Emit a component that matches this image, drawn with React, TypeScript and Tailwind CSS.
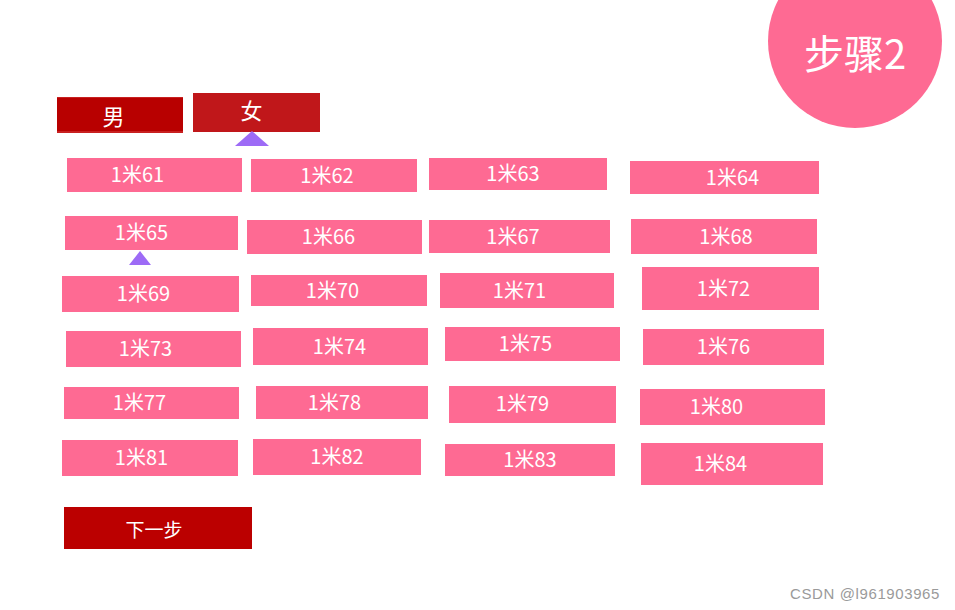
import React from 'react';

type Cell = {
  label: string;
  box: string; // margin + size, measured off the mockup
  text?: string; // nudges the label off-centre like the hand-placed originals
  marker?: boolean;
};

const rows: { height: string; cells: Cell[] }[] = [
  {
    height: 'h-[58px]',
    cells: [
      { label: '1米61', box: 'ml-[67px] mt-[0px] w-[175px] h-[34px]', text: 'pr-[34px]' },
      { label: '1米62', box: 'ml-[9px] mt-[1px] w-[166px] h-[33px]', text: 'pr-[14px]' },
      { label: '1米63', box: 'ml-[12px] mt-[0px] w-[178px] h-[32px]', text: 'pr-[10px]' },
      { label: '1米64', box: 'ml-[23px] mt-[3px] w-[189px] h-[33px]', text: 'pl-[16px]' },
    ],
  },
  {
    height: 'h-[51px]',
    cells: [
      { label: '1米65', box: 'ml-[65px] mt-[0px] w-[173px] h-[34px]', text: 'pr-[20px]', marker: true },
      { label: '1米66', box: 'ml-[9px] mt-[4px] w-[175px] h-[34px]', text: 'pr-[12px]' },
      { label: '1米67', box: 'ml-[7px] mt-[4px] w-[181px] h-[33px]', text: 'pr-[13px]' },
      { label: '1米68', box: 'ml-[21px] mt-[3px] w-[186px] h-[35px]', text: 'pl-[4px]' },
    ],
  },
  {
    height: 'h-[60px]',
    cells: [
      { label: '1米69', box: 'ml-[62px] mt-[9px] w-[177px] h-[36px]', text: 'pr-[14px]' },
      { label: '1米70', box: 'ml-[12px] mt-[8px] w-[176px] h-[31px]', text: 'pr-[13px]' },
      { label: '1米71', box: 'ml-[13px] mt-[6px] w-[174px] h-[35px]', text: 'pr-[15px]' },
      { label: '1米72', box: 'ml-[28px] mt-[0px] w-[177px] h-[43px]', text: 'pr-[14px]' },
    ],
  },
  {
    height: 'h-[59px]',
    cells: [
      { label: '1米73', box: 'ml-[66px] mt-[4px] w-[175px] h-[36px]', text: 'pr-[16px]' },
      { label: '1米74', box: 'ml-[12px] mt-[1px] w-[175px] h-[37px]', text: 'pr-[2px]' },
      { label: '1米75', box: 'ml-[17px] mt-[0px] w-[175px] h-[34px]', text: 'pr-[14px]' },
      { label: '1米76', box: 'ml-[23px] mt-[2px] w-[181px] h-[36px]', text: 'pr-[20px]' },
    ],
  },
  {
    height: 'h-[53px]',
    cells: [
      { label: '1米77', box: 'ml-[64px] mt-[1px] w-[175px] h-[32px]', text: 'pr-[24px]' },
      { label: '1米78', box: 'ml-[17px] mt-[0px] w-[172px] h-[33px]', text: 'pr-[15px]' },
      { label: '1米79', box: 'ml-[21px] mt-[0px] w-[167px] h-[37px]', text: 'pr-[20px] pb-[4px]' },
      { label: '1米80', box: 'ml-[24px] mt-[3px] w-[185px] h-[36px]', text: 'pr-[32px]' },
    ],
  },
  {
    height: 'h-[68px]',
    cells: [
      { label: '1米81', box: 'ml-[62px] mt-[1px] w-[176px] h-[36px]', text: 'pr-[17px]' },
      { label: '1米82', box: 'ml-[15px] mt-[0px] w-[168px] h-[36px]' },
      { label: '1米83', box: 'ml-[24px] mt-[5px] w-[170px] h-[32px]' },
      { label: '1米84', box: 'ml-[26px] mt-[4px] w-[182px] h-[42px]', text: 'pr-[23px]' },
    ],
  },
];

// little purple pointer that marks the current choice
function Pointer({ className }: { className: string }) {
  return (
    <svg className={`absolute ${className}`} viewBox="0 0 34 15" preserveAspectRatio="none">
      <polygon points="17,0 34,15 0,15" fill="#9d6bf6" />
    </svg>
  );
}

function HeightCell({ cell }: { cell: Cell }) {
  return (
    <div className={`relative flex shrink-0 items-center justify-center bg-[#fe6a93] ${cell.box}`}>
      <span className={`pb-[2px] text-[20px] leading-none text-white ${cell.text ?? ''}`}>{cell.label}</span>
      {cell.marker && <Pointer className="left-[64px] top-[35px] h-[14px] w-[22px]" />}
    </div>
  );
}

export default function App() {
  return (
    <div className="h-[610px] w-full overflow-hidden bg-white [font-family:'Noto_Sans_CJK_SC','Noto_Sans',sans-serif]">
      {/* Header: gender toggle + step badge */}
      <div className="flex h-[158px] items-start justify-between">
        <div className="flex items-start pt-[93px]">
          <div className="ml-[57px] mt-[4px] flex h-[36px] w-[126px] items-center justify-center border-t border-b-2 border-[#c82020] bg-[#b80000]">
            <span className="pr-[13px] text-[22px] leading-none text-white">男</span>
          </div>
          <div className="relative ml-[10px] flex h-[39px] w-[127px] items-center justify-center bg-[#c0171a]">
            <span className="pb-[8px] pr-[10px] text-[22px] leading-none text-white">女</span>
            <Pointer className="left-[42px] top-[38px] h-[15px] w-[34px]" />
          </div>
        </div>
        <div className="mr-[13px] -mt-[46px] flex h-[174px] w-[174px] items-center justify-center rounded-full bg-[#fe6a93]">
          <span className="pt-[22px] text-[40px] leading-none text-white">步骤2</span>
        </div>
      </div>

      {/* Height options */}
      {rows.map((row, i) => (
        <div key={i} className={`flex items-start ${row.height}`}>
          {row.cells.map((cell) => (
            <HeightCell key={cell.label} cell={cell} />
          ))}
        </div>
      ))}

      <button
        type="button"
        className="ml-[64px] flex h-[42px] w-[188px] items-center justify-center bg-[#bb0000]"
      >
        <span className="pr-[8px] text-[19px] leading-none text-white">下一步</span>
      </button>

      <div className="mt-[35px] flex justify-end pr-[15px]">
        <span className="text-[15px] leading-[20px] tracking-[0.6px] text-[#9a9a9a] [font-family:'Liberation_Sans',sans-serif]">
          CSDN @l961903965
        </span>
      </div>
    </div>
  );
}
